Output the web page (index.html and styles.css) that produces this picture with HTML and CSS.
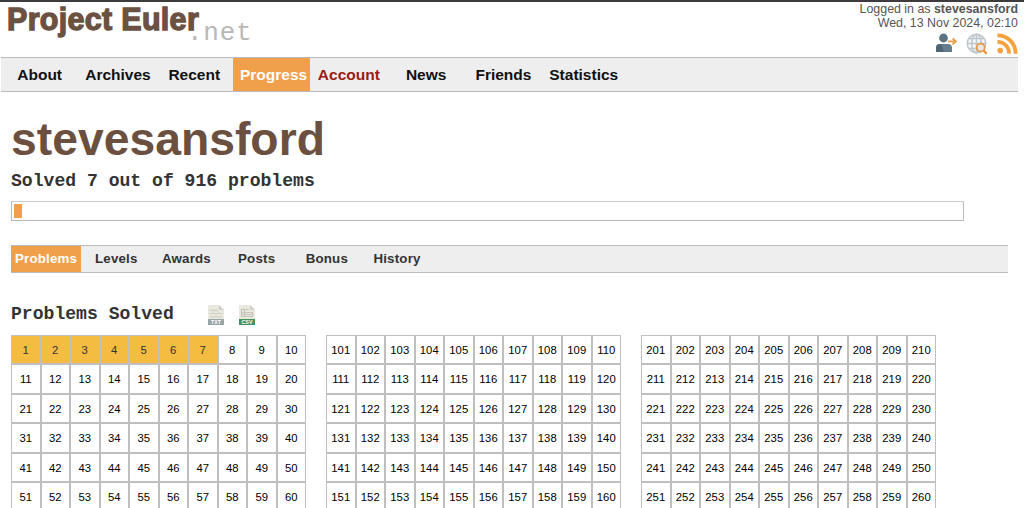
FILE: index.html
```html
<!DOCTYPE html>
<html lang="en">
<head>
<meta charset="utf-8">
<title>Progress - Project Euler</title>
<link rel="stylesheet" href="styles.css">
</head>
<body>
<header class="header">
  <div class="logo"><span class="logo-name">Project Euler</span><span class="logo-net">.net</span></div>
  <div class="info">
    <div class="login">Logged in as <strong>stevesansford</strong></div>
    <div class="date">Wed, 13 Nov 2024, 02:10</div>
    <div class="icons">
      <svg width="22" height="20" viewBox="0 0 22 20"><circle cx="8.5" cy="5" r="4.4" fill="#5b7282"/><path d="M1 19v-4q0-4 4-4h8q4 0 4 4v4z" fill="#657d8c"/><path d="M1 19v-4q0-4 4-4h1l3 8z" fill="#506675"/><path d="M13 8.4h7M17.6 5.4l3.2 3-3.2 3" fill="none" stroke="#ef9d4b" stroke-width="1.9"/></svg>
      <svg width="22" height="22" viewBox="0 0 22 22"><g fill="none" stroke="#bdc6cc" stroke-width="1.4"><circle cx="10.5" cy="10.5" r="9.3" fill="#f3f5f6"/><ellipse cx="10.5" cy="10.5" rx="4.7" ry="9.3"/><path d="M10.5 1v19M1 10.5h19M3 5.5h15M3 15.5h15"/></g><circle cx="14.7" cy="14.6" r="4" fill="#e5e8e8" stroke="#e69a4d" stroke-width="1.8"/><path d="M17.6 17.5l3 3.2" stroke="#ef913b" stroke-width="2.2"/></svg>
      <svg width="21" height="21" viewBox="0 0 21 21"><circle cx="3.2" cy="17.6" r="2.8" fill="#f6a13a"/><path d="M.5 8.8A11.3 11.3 0 0 1 12 20.7M.5 2.3A18 18 0 0 1 18.6 20.7" fill="none" stroke="#f6a13a" stroke-width="3.8"/></svg>
    </div>
  </div>
</header>
<nav class="nav">
  <a>About</a><a class="archives">Archives</a><a>Recent</a><a class="current">Progress</a><a class="account">Account</a><a>News</a><a>Friends</a><a class="statistics">Statistics</a>
</nav>
<main class="content">
  <h1 class="username">stevesansford</h1>
  <h3 class="solved">Solved 7 out of 916 problems</h3>
  <div class="bar"><div class="bar-fill"></div></div>
  <nav class="tabs">
    <a class="current">Problems</a><a>Levels</a><a>Awards</a><a>Posts</a><a>Bonus</a><a>History</a>
  </nav>
  <div class="heading">
    <h3 class="heading-text">Problems Solved</h3>
    <svg class="file" width="16" height="20" viewBox="0 0 16 20"><path d="M0 0h11l5 5v10H0z" fill="#e9e8df"/><path d="M11 0v5h5z" fill="#d2d1c8"/><path d="M2 6l2-1 2 1 2-1 2 1M2 9l3-1 3 1 3-1 3 1M2 12h4l2-1 2 1h4" fill="none" stroke="#cbc9c0" stroke-width="1"/><path d="M0 14h16v6H0z" fill="#98a4a5"/><text class="file-label" x="8" y="19" text-anchor="middle">TXT</text></svg>
    <svg class="file" width="16" height="20" viewBox="0 0 16 20"><path d="M0 0h11l5 5v10H0z" fill="#e9e8df"/><path d="M11 0v5h5z" fill="#d2d1c8"/><path d="M2.5 4.5h7M2.5 7.5h11M2.5 9.5h11M2.5 11.5h11M2.5 4v8M5.5 4v8M13.5 7v5" fill="none" stroke="#c5c3ba" stroke-width="1"/><path d="M0 14h16v6H0z" fill="#45925a"/><text class="file-label" x="8" y="19" text-anchor="middle">CSV</text></svg>
  </div>
  <div class="tables" id="tables"></div>
</main>
<script src="script.js"></script>
</body>
</html>
```
FILE: styles.css
```css
* { box-sizing: border-box; }
body {
  margin: 0;
  height: 508px;
  overflow: hidden;
  background: #fff;
  border-top: 2px solid #3d3b3d;
  font-family: "Liberation Sans", Arial, sans-serif;
  color: #111;
}
h1, h3 { margin: 0; }
.header {
  display: flex;
  justify-content: space-between;
  height: 55px;
  padding: 0 6px 0 7px;
}
.logo { display: flex; white-space: pre; }
.logo-name {
  font-size: 30.5px;
  line-height: 34px;
  font-weight: bold;
  color: #6b5141;
  -webkit-text-stroke: 1.3px #6b5141;
  letter-spacing: 0.3px;
}
.logo-net {
  margin: 14px 0 0 -12px;
  font: 26px/34px "Liberation Mono", monospace;
  letter-spacing: 0.7px;
  color: #b8b8b8;
}
.info {
  text-align: right;
  font-size: 12.4px;
  line-height: 14px;
  color: #555;
}
.icons {
  display: flex;
  justify-content: flex-end;
  gap: 9px;
  margin-top: 3px;
}
.nav {
  display: grid;
  grid-template-columns: repeat(8, 77.3px);
  width: 1017px;
  height: 35px;
  margin-left: 1px;
  background: #eee;
  border: solid #bbb;
  border-width: 1px 0;
  font-size: 15.5px;
  line-height: 33px;
  font-weight: bold;
  text-align: center;
}
.nav .current { padding-left: 4px; }
.nav .archives { padding-left: 2px; }
.nav .statistics { padding-left: 6px; }
.current { background: #f09f4b; color: #fff; }
.account { color: #9b1b14; }
.content { padding-left: 11px; }
.username {
  margin-top: 20px;
  font-size: 46.3px;
  line-height: 54px;
  color: #6b5040;
}
.solved, .heading-text {
  font: bold 18.08px/20px "Liberation Mono", monospace;
  color: #333;
}
.solved { margin-top: 5px; }
.bar {
  width: 953px;
  height: 20px;
  margin-top: 10px;
  padding: 2px;
  border: 1px solid #bbb;
  border-top-color: #ccc;
}
.bar-fill { width: 8px; height: 14px; background: #f09f4b; }
.tabs {
  display: grid;
  grid-template-columns: repeat(6, 70.2px);
  width: 997px;
  height: 28px;
  margin-top: 24px;
  background: #eee;
  border: solid #bbb;
  border-width: 1px 0;
  font-size: 13.3px;
  letter-spacing: 0.2px;
  line-height: 26px;
  font-weight: bold;
  text-align: center;
  color: #333;
}
.heading {
  display: flex;
  height: 20px;
  margin-top: 31px;
}
.heading-text { width: 197px; }
.file { margin: 1px 15px 0 0; }
.file-label {
  font: bold 5.3px "Liberation Sans", sans-serif;
  fill: #fff;
}
.tables { display: flex; gap: 20px; margin-top: 11px; }
.grid {
  display: grid;
  grid-template-columns: repeat(10, 1fr);
  grid-auto-rows: 27.45px;
  gap: 2px;
  width: 295px;
  padding: 1px;
  background: #bfbfbf;
}
.cell {
  background: #fff;
  font-size: 11.3px;
  line-height: 28px;
  text-align: center;
  color: #000;
}
.done { background: #f5bc42; color: #333; }
```
FILE: script.js
```js
const SOLVED = 7;
const tables = document.getElementById("tables");
for (let start = 1; start <= 201; start += 100) {
  const grid = document.createElement("div");
  grid.className = "grid";
  for (let n = start; n < start + 60; n++) {
    const cell = document.createElement("div");
    cell.className = n <= SOLVED ? "cell done" : "cell";
    cell.textContent = n;
    grid.appendChild(cell);
  }
  tables.appendChild(grid);
}
```
